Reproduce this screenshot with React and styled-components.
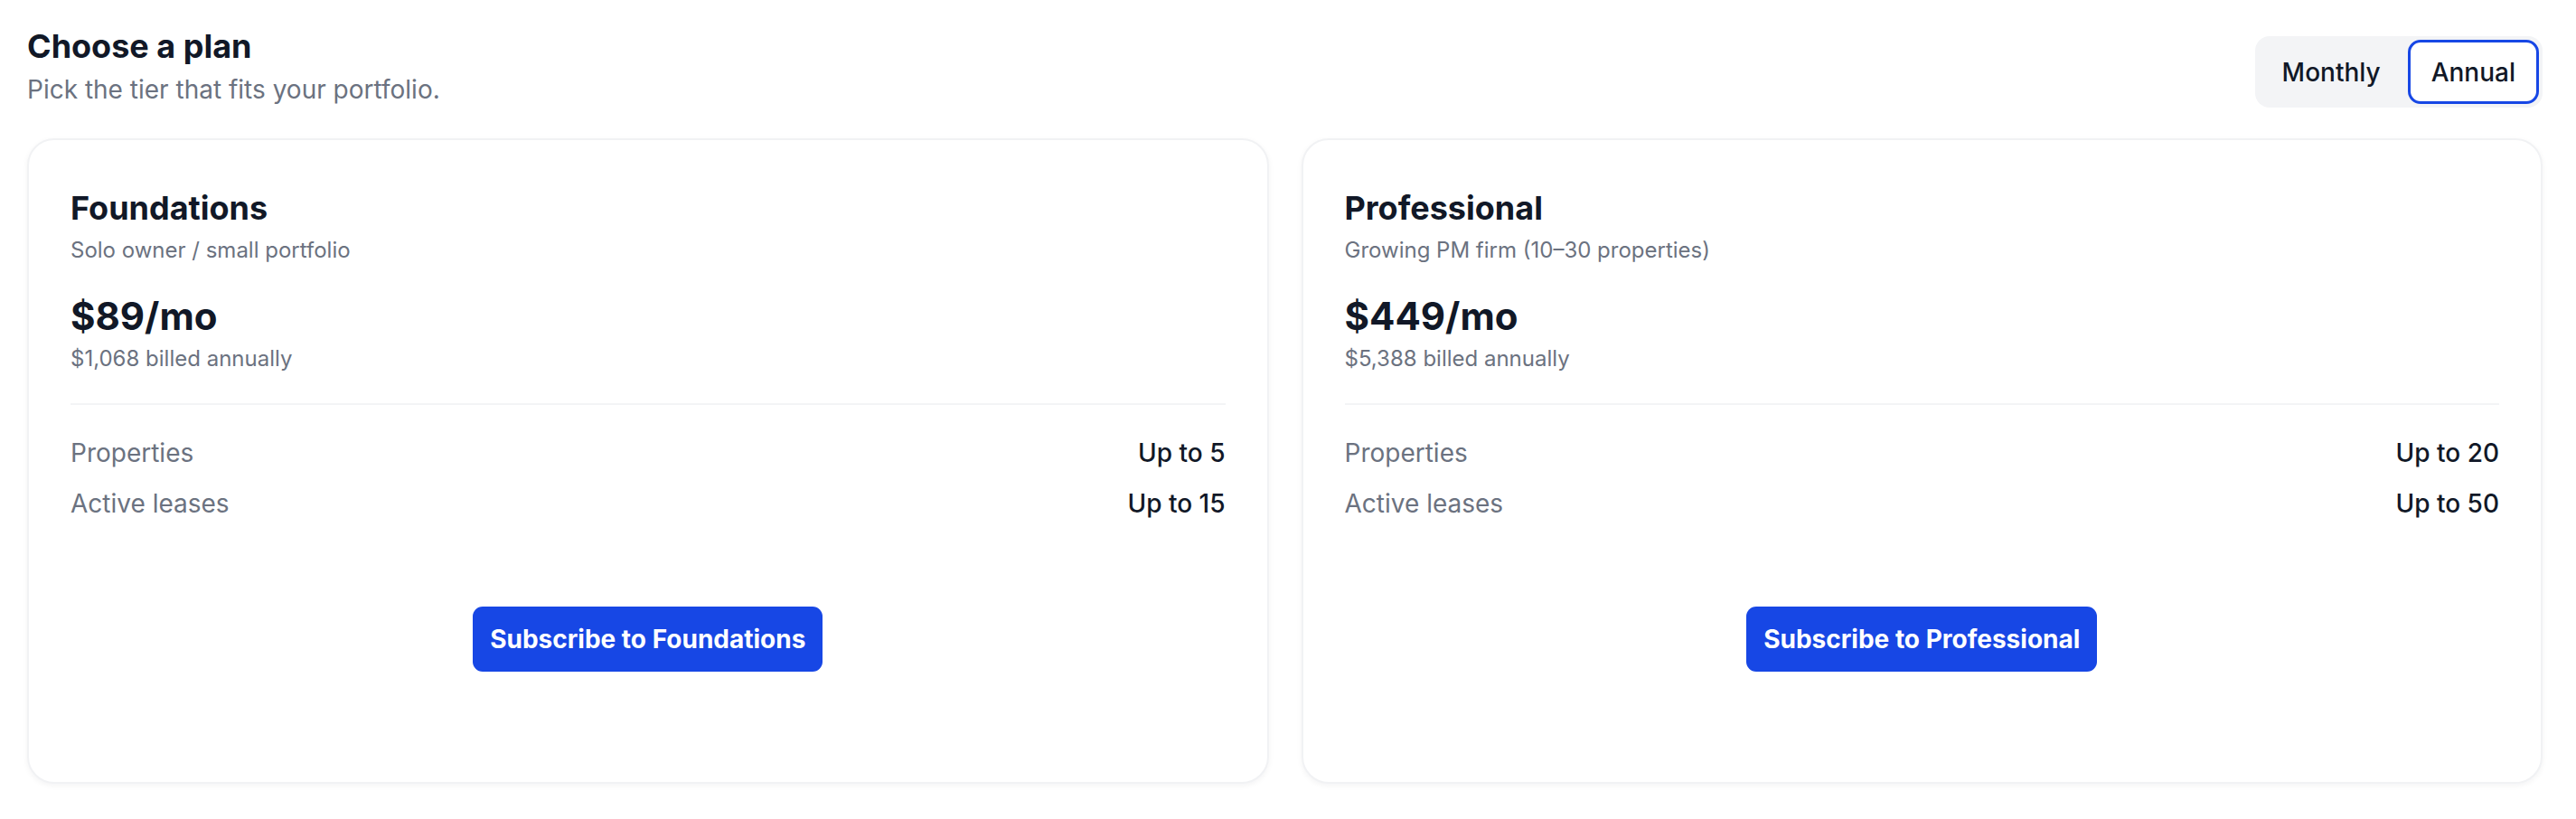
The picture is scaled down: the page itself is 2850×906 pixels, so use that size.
import React from 'react';
import styled, {createGlobalStyle} from 'styled-components';

const GlobalStyle = createGlobalStyle`
  * { box-sizing: border-box; }
  body {
    margin: 0;
    background: #ffffff;
    font-family: Inter, "Liberation Sans", sans-serif;
    color: #111827;
  }
`;

const plans = [
  {
    name: 'Foundations',
    blurb: 'Solo owner / small portfolio',
    price: '$89/mo',
    billed: '$1,068 billed annually',
    limits: [['Properties', 'Up to 5'], ['Active leases', 'Up to 15']],
  },
  {
    name: 'Professional',
    blurb: 'Growing PM firm (10–30 properties)',
    price: '$449/mo',
    billed: '$5,388 billed annually',
    limits: [['Properties', 'Up to 20'], ['Active leases', 'Up to 50']],
  },
];

const App = () => {
  return (
    <>
      <GlobalStyle />
      <Page>
        <Header>
          <div>
            <Title>Choose a plan</Title>
            <Subtitle>Pick the tier that fits your portfolio.</Subtitle>
          </div>
          <Toggle>
            <ToggleButton>Monthly</ToggleButton>
            <ToggleButton active>Annual</ToggleButton>
          </Toggle>
        </Header>
        <Grid>
          {plans.map(plan => (
            <Card key={plan.name}>
              <PlanName>{plan.name}</PlanName>
              <Blurb>{plan.blurb}</Blurb>
              <Price>{plan.price}</Price>
              <Billed>{plan.billed}</Billed>
              <Divider />
              <Limits>
                {plan.limits.map(([label, value]) => (
                  <LimitRow key={label}>
                    <span>{label}</span>
                    <strong>{value}</strong>
                  </LimitRow>
                ))}
              </Limits>
              <Actions>
                <Subscribe>Subscribe to {plan.name}</Subscribe>
              </Actions>
            </Card>
          ))}
        </Grid>
      </Page>
    </>
  );
};

const Page = styled.div`
  padding: 29px 37px 30px 30px;
`;

const Header = styled.div`
  display: flex;
  justify-content: space-between;
  align-items: flex-end;
`;

const Title = styled.h1`
  margin: 0;
  font-size: 36px;
  line-height: 44px;
  font-weight: 700;
  color: #111827;
`;

const Subtitle = styled.p`
  margin: 8px 0 0;
  font-size: 28px;
  line-height: 36px;
  color: #6b7280;
`;

const Toggle = styled.div`
  display: flex;
  gap: 4px;
  padding: 4px;
  background: #f3f4f6;
  border-radius: 16px;
  margin-bottom: -2px;
`;

const ToggleButton = styled.button`
  height: 71px;
  padding: 0 23px;
  border: 3px solid ${p => (p.active ? '#1747e5' : 'transparent')};
  border-radius: 14px;
  background: ${p => (p.active ? '#ffffff' : 'transparent')};
  font-family: inherit;
  font-size: 28px;
  font-weight: 500;
  color: #111827;
`;

const Grid = styled.div`
  display: grid;
  grid-template-columns: 1fr 1fr;
  gap: 36px;
  margin-top: 36px;
`;

const Card = styled.div`
  display: flex;
  flex-direction: column;
  padding: 53px 46px 122px;
  background: #ffffff;
  border: 2px solid #f1f2f4;
  border-radius: 30px;
  box-shadow: 0 2px 6px rgba(17, 24, 39, 0.05);
`;

const PlanName = styled.h2`
  margin: 0;
  font-size: 36px;
  line-height: 44px;
  font-weight: 700;
  color: #111827;
`;

const Blurb = styled.div`
  margin-top: 9px;
  font-size: 24px;
  line-height: 32px;
  color: #6b7280;
`;

const Price = styled.div`
  margin-top: 31px;
  font-size: 42px;
  line-height: 52px;
  font-weight: 700;
  color: #111827;
`;

const Billed = styled.div`
  margin-top: 5px;
  font-size: 24px;
  line-height: 32px;
  color: #6b7280;
`;

const Divider = styled.hr`
  margin: 33px 0 0;
  border: 0;
  height: 2px;
  background: #f3f4f6;
`;

const Limits = styled.div`
  display: flex;
  flex-direction: column;
  gap: 20px;
  margin-top: 35px;
`;

const LimitRow = styled.div`
  display: flex;
  justify-content: space-between;
  font-size: 28px;
  line-height: 36px;
  color: #6b7280;
  strong {
    font-weight: 500;
    color: #111827;
  }
`;

const Actions = styled.div`
  display: flex;
  justify-content: center;
  margin-top: 96px;
`;

const Subscribe = styled.button`
  height: 72px;
  padding: 0 19px;
  border: 0;
  border-radius: 11px;
  background: #1747e5;
  color: #ffffff;
  font-family: inherit;
  font-size: 28px;
  font-weight: 700;
`;

export default App;
